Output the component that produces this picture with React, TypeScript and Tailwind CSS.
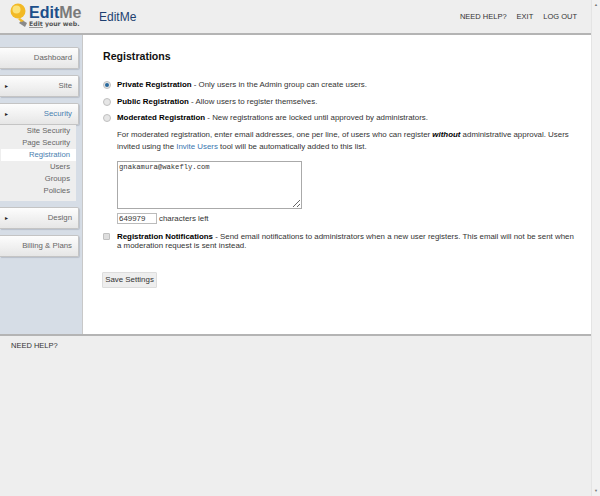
import type { ReactNode } from 'react';

const sans = { fontFamily: '"Liberation Sans", Arial, sans-serif' };

function NavButton({ label, arrow = false, active = false }: { label: string; arrow?: boolean; active?: boolean }) {
  return (
    <div className="flex h-[22px] w-[79px] items-center justify-between rounded-r-[2px] border border-l-0 border-[#c4c4c4] bg-gradient-to-b from-[#fdfdfd] to-[#e6e6e6] pr-[6px] pl-[5px] shadow-[1px_1px_1px_#b8bfca]">
      <span className="text-[6px] text-[#222]">{arrow ? '▸' : ''}</span>
      <span className={`text-[7.8px] ${active ? 'text-[#4a7fb0]' : 'text-[#666]'}`}>{label}</span>
    </div>
  );
}

function SubLink({ label, active = false }: { label: string; active?: boolean }) {
  return (
    <div className={`flex h-[12px] items-center justify-end pr-[6px] text-[7.7px] ${active ? 'bg-white text-[#4a7fb0]' : 'text-[#666]'}`}>
      {label}
    </div>
  );
}

function Option({ title, text, checked = false }: { title: string; text: string; checked?: boolean }) {
  return (
    <div className="flex h-[16.5px] items-center">
      <span className="flex h-[8px] w-[8px] shrink-0 items-center justify-center rounded-full border border-[#c0c0c0] bg-[#e6e6e6]">
        {checked && <span className="h-[4px] w-[4px] rounded-full bg-[#2a6a9e]" />}
      </span>
      <p className="ml-[6px] whitespace-nowrap text-[7.9px] text-[#333]">
        <b className="text-black">{title}</b> - {text}
      </p>
    </div>
  );
}

function Header({ children }: { children: ReactNode }) {
  return <div className="flex h-[35px] shrink-0 items-center border-b-[2px] border-[#b4b4b4] bg-[#eeeeee]">{children}</div>;
}

function Logo() {
  return (
    <div className="ml-[10px] flex h-[33px] w-[72px] items-start">
      <svg width="18" height="24" viewBox="0 0 18 24" className="mt-[3px] shrink-0">
        <path d="M12 17 L17 20 L15 24 L9 20 Z" fill="#8a8a8a" />
        <circle cx="8" cy="8" r="7.5" fill="#f2b925" />
        <path d="M10 15 L14 18 L11 19 L8 16 Z" fill="#f2b925" />
        <circle cx="6.5" cy="6.5" r="4" fill="#fbe27a" />
      </svg>
      <div className="ml-[1px] mt-[5px]">
        <div className="text-[16px] font-bold leading-[15px] text-[#1d4f8a]">
          Edit<span className="text-[#7a7a7a]">Me</span>
        </div>
        <div
          className="whitespace-nowrap text-[6.2px] font-bold leading-[7px] text-[#555]"
          style={{ fontFamily: '"DejaVu Sans", sans-serif' }}
        >
          <span className="border-b border-[#999]">Edit</span> your web.
        </div>
      </div>
    </div>
  );
}

export default function App() {
  return (
    <div className="flex h-[496px] w-[600px] overflow-hidden bg-[#eeeeee]" style={sans}>
      <div className="flex w-[591px] flex-col">
        <Header>
          <Logo />
          <span className="ml-[17px] text-[12px] text-[#1d3f70]">EditMe</span>
          <div className="ml-auto mr-[14px] flex gap-[10px] text-[7.5px] text-[#333]">
            <span>NEED HELP?</span>
            <span>EXIT</span>
            <span>LOG OUT</span>
          </div>
        </Header>

        <div className="flex h-[301px] shrink-0 border-b-[2px] border-[#b4b4b4]">
          <aside className="w-[83px] shrink-0 border-r-[1px] border-[#c8c8c8] bg-[#d6dde6] pt-[12px]">
            <div className="flex flex-col gap-[6px]">
              <NavButton label="Dashboard" />
              <NavButton label="Site" arrow />
              <div>
                <NavButton label="Security" arrow active />
                <div className="w-[76px] bg-[#eeeeee] pb-[4px] pl-[1px]">
                  <SubLink label="Site Security" />
                  <SubLink label="Page Security" />
                  <SubLink label="Registration" active />
                  <SubLink label="Users" />
                  <SubLink label="Groups" />
                  <SubLink label="Policies" />
                </div>
              </div>
              <NavButton label="Design" arrow />
              <NavButton label="Billing & Plans" />
            </div>
          </aside>

          <main className="flex-1 bg-white pl-[20px] pt-[13px]">
            <h1 className="text-[10.6px] font-bold leading-[16px] text-[#111]">Registrations</h1>
            <div className="mt-[13px]">
              <Option title="Private Registration" text="Only users in the Admin group can create users." checked />
              <Option title="Public Registration" text="Allow users to register themselves." />
              <Option title="Moderated Registration" text="New registrations are locked until approved by administrators." />
            </div>
            <div className="ml-[14px]">
              <p className="mt-[2.5px] w-[458px] text-[7.9px] leading-[12px] text-[#333]">
                For moderated registration, enter email addresses, one per line, of users who can register{' '}
                <b className="italic text-black">without</b> administrative approval. Users invited using the{' '}
                <span className="text-[#3a76b0]">Invite Users</span> tool will be automatically added to this list.
              </p>
              <textarea
                readOnly
                value="gnakamura@wakefly.com"
                className="mt-[8px] block h-[48px] w-[185px] border border-[#aaa] bg-white px-[1px] text-[7.2px] leading-[10px] text-[#333]"
                style={{ fontFamily: '"Liberation Mono", monospace' }}
              />
              <div className="mt-[4px] flex h-[11px] items-center">
                <input
                  readOnly
                  value="649979"
                  className="h-[11px] w-[40px] border border-[#bbb] px-[1px] text-[7.9px] text-[#333]"
                />
                <span className="ml-[2px] text-[7.9px] text-[#333]">characters left</span>
              </div>
            </div>
            <div className="mt-[7.5px] flex">
              <span className="mt-[1px] h-[7px] w-[7px] shrink-0 rounded-[1px] border border-[#c0c0c0] bg-[#dedede]" />
              <p className="ml-[7px] w-[460px] text-[7.9px] leading-[9px] text-[#333]">
                <b className="text-black">Registration Notifications</b> - Send email notifications to administrators when a new user registers. This email will not be sent when a moderation request is sent instead.
              </p>
            </div>
            <button className="-ml-[1px] mt-[22.5px] block h-[16px] w-[55px] whitespace-nowrap rounded-[1px] border border-[#ddd] bg-[#eeeeee] text-[7.9px] text-[#333]">
              Save Settings
            </button>
          </main>
        </div>

        <div className="flex-1 pl-[11px] pt-[4px] text-[7.5px] text-[#333]">NEED HELP?</div>
      </div>

      <div className="flex w-[9px] flex-col border-l border-[#e4e4e4] bg-[#f1f1f1]">
        <div className="flex h-[10px] items-center justify-center text-[4px] text-[#777]">▲</div>
        <div className="flex-1" />
        <div className="flex h-[10px] items-center justify-center text-[4px] text-[#777]">▼</div>
      </div>
    </div>
  );
}
